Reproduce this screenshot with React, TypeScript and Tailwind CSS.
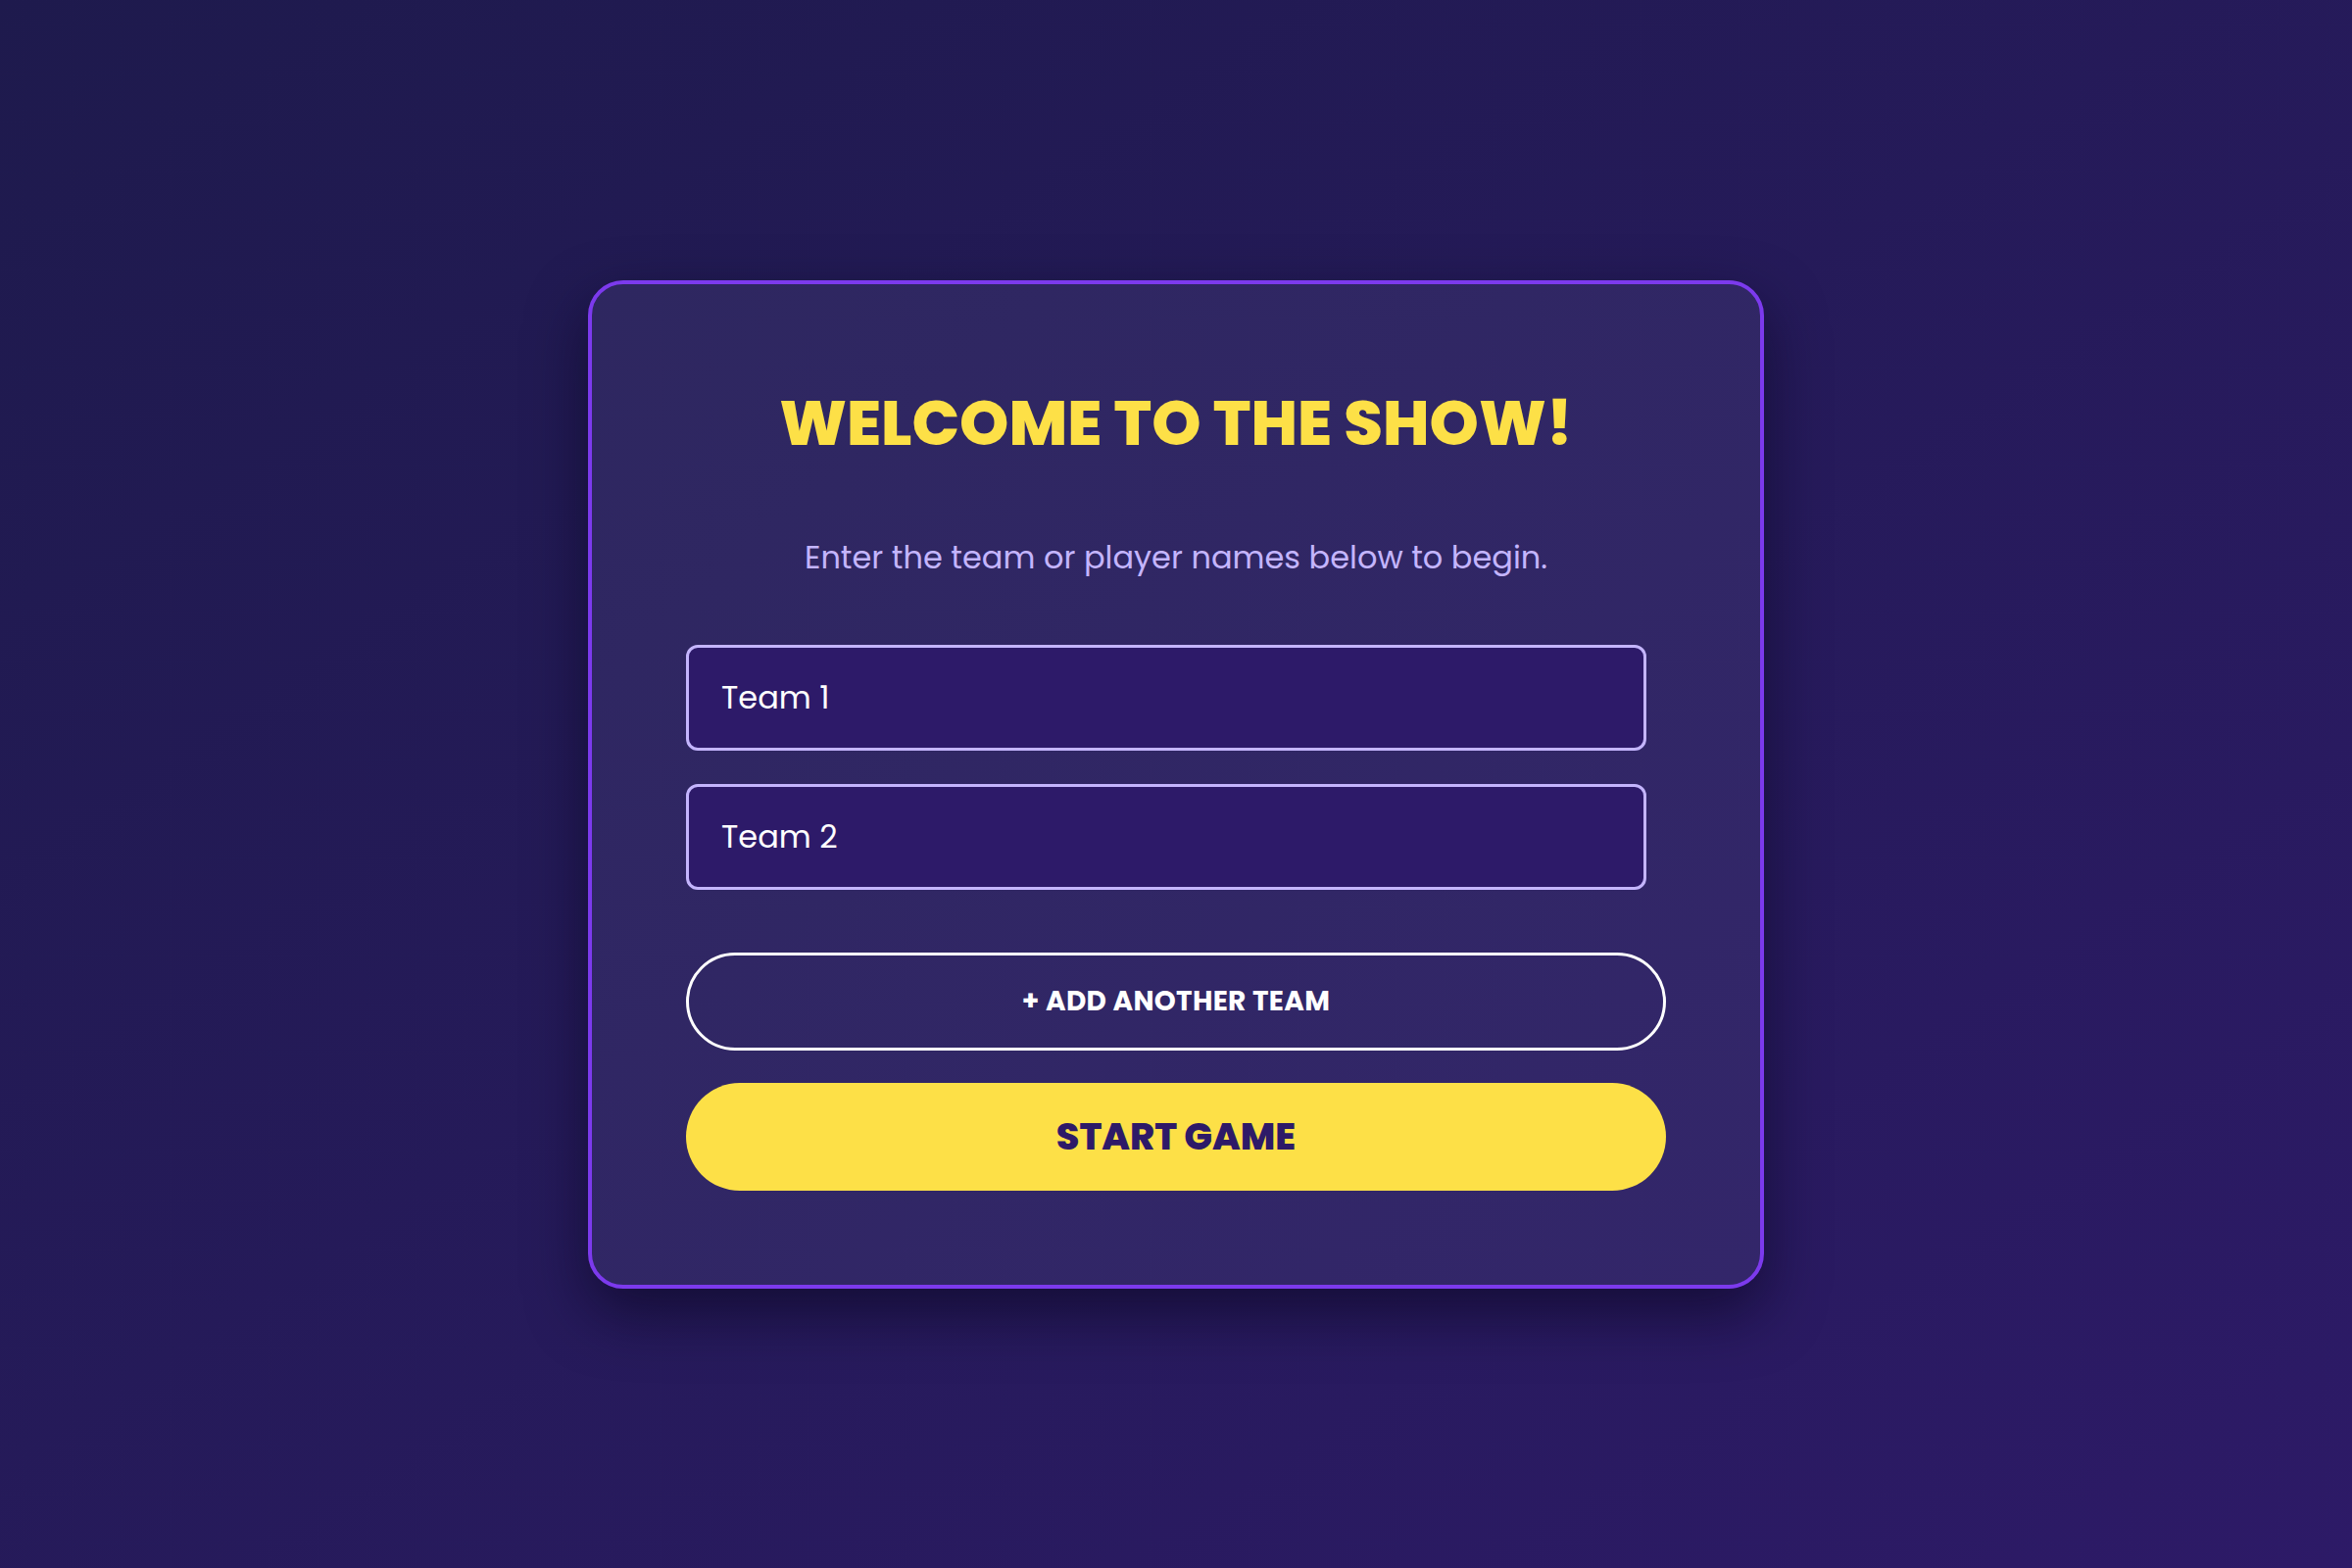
import React from "react";

export default function App() {
  return (
    <div
      className="min-h-screen w-full flex items-center justify-center bg-linear-to-br from-[#1e1a4d] to-[#2d1a67]"
      style={{ fontFamily: 'Poppins, Inter, "Noto Sans", sans-serif' }}
    >
      <div className="w-[1200px] rounded-[36px] border-4 border-[#7c3aed] bg-linear-to-br from-[#2e2760] to-[#33266a] shadow-[0_25px_60px_rgba(8,5,30,0.6)] px-[96px] pt-[95px] pb-[96px] flex flex-col">
        <h1 className="h-[94px] flex items-center justify-center text-[64px] font-extrabold text-[#fde047] leading-none">
          WELCOME TO THE SHOW!
        </h1>
        <p className="mt-[70px] h-[40px] flex items-center justify-center text-[32px] text-[#c4b5fd] leading-none">
          Enter the team or player names below to begin.
        </p>
        <div className="mt-[69px] flex flex-col gap-[34px]">
          <input
            defaultValue="Team 1"
            className="w-[980px] h-[108px] rounded-[12px] border-[3px] border-[#c4b5fd] bg-[#2d1a69] pl-[33px] text-[32px] text-white outline-none"
          />
          <input
            defaultValue="Team 2"
            className="w-[980px] h-[108px] rounded-[12px] border-[3px] border-[#c4b5fd] bg-[#2d1a69] pl-[33px] text-[32px] text-white outline-none"
          />
        </div>
        <button className="mt-[64px] h-[100px] w-full rounded-full border-[3px] border-white bg-transparent text-[28px] font-bold text-white tracking-[0.3px]">
          + ADD ANOTHER TEAM
        </button>
        <button className="mt-[33px] h-[110px] w-full rounded-full bg-[#fde047] text-[38px] font-extrabold text-[#2e1a68]">
          START GAME
        </button>
      </div>
    </div>
  );
}
